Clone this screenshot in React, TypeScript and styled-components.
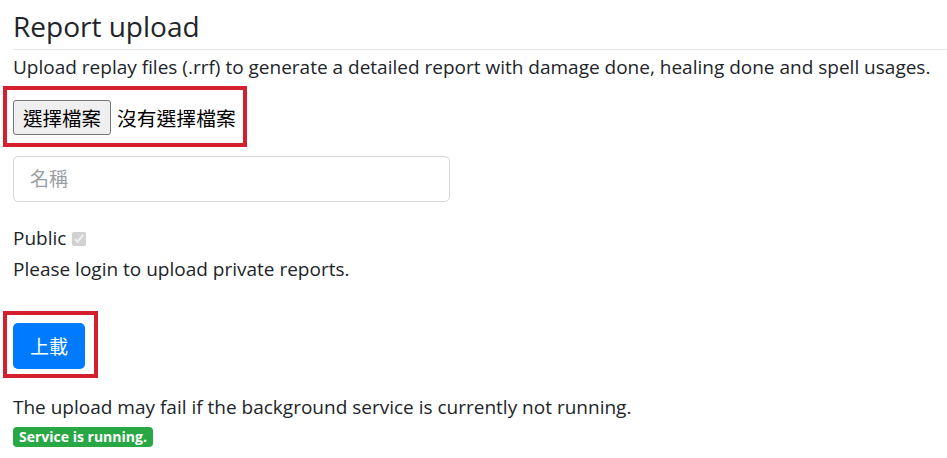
import * as React from 'react';
import styled, { createGlobalStyle } from 'styled-components';

const GlobalStyle = createGlobalStyle`
  body {
    margin: 0;
    background: #fff;
    color: #212529;
    font-family: 'Open Sans', 'Noto Sans CJK TC', sans-serif;
  }
`;

const cjk = `'Open Sans', 'Noto Sans CJK TC', sans-serif`;

const Page = styled.div`
  display: flex;
  flex-direction: column;
  align-items: flex-start;
  padding-left: 13px;
`;

const Title = styled.h3`
  align-self: stretch;
  margin: 0;
  padding: 8px 0 5px;
  font-size: 28px;
  font-weight: 400;
  line-height: 36px;
  border-bottom: 1px solid #e6e6e6;
`;

const Text = styled.p<{ top?: number }>`
  margin: ${(p) => p.top ?? 0}px 0 0;
  font-size: 19px;
  line-height: 30px;
`;

// red annotation frame round a control
const Highlight = styled.div<{ top: number; pad: string }>`
  display: inline-flex;
  align-items: center;
  gap: 6px;
  margin: ${(p) => p.top}px 0 0 -10px;
  border: 4px solid #d3202c;
  padding: ${(p) => p.pad};
`;

const FileButton = styled.button`
  height: 35px;
  padding: 0 9px;
  font-family: ${cjk};
  font-size: 19.5px;
  color: #000;
  background: #efefef;
  border: 1px solid #767676;
  border-radius: 3px;
`;

const FileName = styled.span`
  font-family: ${cjk};
  font-size: 19.8px;
  color: #000;
`;

const NameInput = styled.input`
  box-sizing: border-box;
  width: 437px;
  height: 46px;
  margin-top: 9px;
  padding: 0 16px;
  font-family: ${cjk};
  font-size: 19px;
  border: 1px solid #d6d9dc;
  border-radius: 5px;
  &::placeholder {
    color: #9a9ea3;
  }
`;

const CheckRow = styled.label`
  display: flex;
  align-items: center;
  gap: 6px;
  margin-top: 21px;
  font-size: 19px;
  line-height: 30px;
`;

const Check = styled.input`
  width: 14px;
  height: 14px;
  margin: 2px 0 0;
`;

const UploadButton = styled.button`
  height: 46px;
  padding: 0 17px;
  font-family: ${cjk};
  font-size: 19px;
  color: #fff;
  background: #007bff;
  border: none;
  border-radius: 5px;
`;

const Badge = styled.span`
  margin-top: 5px;
  padding: 0 6px;
  height: 20px;
  line-height: 20px;
  font-size: 14px;
  font-weight: 700;
  color: #fff;
  background: #28a745;
  border-radius: 4px;
`;

export default function App() {
  return (
    <Page>
      <GlobalStyle />
      <Title>Report upload</Title>
      <Text top={2}>
        Upload replay files (.rrf) to generate a detailed report with damage done, healing done and spell usages.
      </Text>
      <Highlight top={4} pad="10px 7px 8px 6px">
        <FileButton>選擇檔案</FileButton>
        <FileName>沒有選擇檔案</FileName>
      </Highlight>
      <NameInput placeholder="名稱" />
      <CheckRow>
        Public <Check type="checkbox" checked disabled readOnly />
      </CheckRow>
      <Text top={1}>Please login to upload private reports.</Text>
      <Highlight top={27} pad="8px 9px 5px 6px">
        <UploadButton>上載</UploadButton>
      </Highlight>
      <Text top={14}>The upload may fail if the background service is currently not running.</Text>
      <Badge>Service is running.</Badge>
    </Page>
  );
}
